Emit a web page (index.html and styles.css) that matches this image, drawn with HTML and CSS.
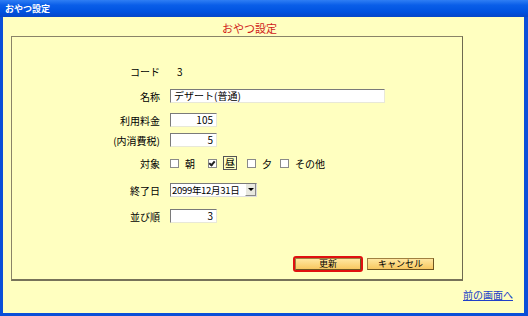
FILE: index.html
```html
<!DOCTYPE html>
<html lang="ja">
<head>
    <meta charset="UTF-8">
    <title>おやつ設定</title>
    <link rel="stylesheet" href="styles.css">
</head>
<body>
    <div class="window">
        <div class="titlebar">おやつ設定</div>
        <div class="client">
            <h1 class="heading">おやつ設定</h1>
            <div class="panel">
                <div class="row r-code">
                    <span class="label">コード</span>
                    <span class="value">3</span>
                </div>
                <div class="row r-name">
                    <span class="label">名称</span>
                    <span class="field wide">デザート(普通)</span>
                </div>
                <div class="row r-price">
                    <span class="label">利用料金</span>
                    <span class="field num">105</span>
                </div>
                <div class="row r-tax">
                    <span class="label">(内消費税)</span>
                    <span class="field num">5</span>
                </div>
                <div class="row r-target">
                    <span class="label">対象</span>
                    <div class="checks">
                        <span class="check c1"><span class="box"></span>朝</span>
                        <span class="check c2"><span class="box on"></span><span class="focus">昼</span></span>
                        <span class="check c3"><span class="box"></span>夕</span>
                        <span class="check"><span class="box"></span>その他</span>
                    </div>
                </div>
                <div class="row r-end">
                    <span class="label">終了日</span>
                    <span class="select">
                        <span class="select-text">2099年12月31日</span>
                        <span class="select-btn"></span>
                    </span>
                </div>
                <div class="row r-order">
                    <span class="label">並び順</span>
                    <span class="field num">3</span>
                </div>
                <div class="buttons">
                    <span class="focus-ring"><button class="btn">更新</button></span>
                    <button class="btn cancel">キャンセル</button>
                </div>
            </div>
            <div class="footer">
                <a href="#" class="back">前の画面へ</a>
            </div>
        </div>
    </div>
</body>
</html>
```

FILE: styles.css
```css
body {
    margin: 0;
    font-family: "Noto Sans CJK JP", "Liberation Sans", sans-serif;
    font-size: 10px;
    color: #000;
    background: #ffffc0;
}
.window {
    width: 528px;
    height: 316px;
    box-sizing: border-box;
    border-left: 3px solid #0a4fd8;
    border-right: 4px solid #0a4fd8;
    border-bottom: 3px solid #0a4fd8;
    display: flex;
    flex-direction: column;
}
.titlebar {
    height: 17px;
    margin: 0 -4px 0 -3px;
    padding-left: 5px;
    background: linear-gradient(#2f7ef4 0%, #0a5ee8 30%, #0052e0 70%, #0646c8 100%);
    color: #fff;
    font-weight: bold;
    font-size: 9px;
    line-height: 17px;
}
.client {
    flex: 1;
    background: #ffffc0;
}
.heading {
    margin: 0;
    height: 19px;
    text-align: center;
    color: #d01818;
    font-size: 11px;
    font-weight: normal;
    line-height: 22px;
    padding-right: 28px;
}
.panel {
    margin-left: 8px;
    width: 452px;
    height: 245px;
    box-sizing: border-box;
    border: 1px solid #8a8468;
    border-right-color: #6e6a50;
    border-bottom: 2px solid #77735a;
    padding-top: 27px;
}
.row {
    display: flex;
    align-items: center;
    height: 14px;
}
.label {
    width: 148px;
    text-align: right;
    margin-right: 10px;
}
.r-name { margin-top: 11px; }
.r-price { margin-top: 10px; }
.r-tax { margin-top: 6px; }
.r-target { margin-top: 9px; }
.r-end { margin-top: 13px; }
.r-order { margin-top: 12px; }
.value { padding-left: 7px; }
.field {
    height: 14px;
    box-sizing: border-box;
    background: #fff;
    border-top: 1px solid #7a7a7a;
    border-left: 1px solid #7a7a7a;
    border-right: 1px solid #e8e8d8;
    border-bottom: 1px solid #e8e8d8;
    line-height: 12px;
    padding: 0 3px;
}
.wide { width: 215px; }
.num { width: 47px; text-align: right; }
.checks {
    display: flex;
    align-items: center;
}
.check {
    display: flex;
    align-items: center;
    flex-shrink: 0;
}
.c1 { width: 38px; }
.c2 { width: 39px; }
.c3 { width: 33px; }
.box {
    flex-shrink: 0;
    width: 7px;
    height: 7px;
    border: 1px solid #8a8a8a;
    background: #fff;
    margin-right: 6px;
    position: relative;
}
.box.on::after {
    content: "";
    position: absolute;
    left: 1px;
    top: 0;
    width: 2px;
    height: 4px;
    border-right: 2px solid #222;
    border-bottom: 2px solid #222;
    transform: rotate(40deg);
}
.focus {
    border: 1px solid #555;
    padding: 0 1px;
    line-height: 12px;
}
.select {
    display: flex;
    width: 87px;
    height: 14px;
    box-sizing: border-box;
    background: #fff;
    border: 1px solid #7a7a7a;
    border-right-color: #ddd;
    border-bottom-color: #ddd;
}
.select-text {
    flex: 1;
    font-size: 9.5px;
    line-height: 12px;
    padding-left: 1px;
    letter-spacing: -0.3px;
}
.select-btn {
    width: 11px;
    background: #e8e8e0;
    border-left: 1px solid #fff;
    border-right: 1px solid #888;
    border-bottom: 1px solid #888;
    box-sizing: border-box;
    position: relative;
}
.select-btn::after {
    content: "";
    position: absolute;
    left: 2px;
    top: 4px;
    border-left: 3px solid transparent;
    border-right: 3px solid transparent;
    border-top: 3px solid #000;
}
.buttons {
    display: flex;
    align-items: center;
    margin-top: 33px;
    padding-left: 281px;
}
.focus-ring {
    display: inline-flex;
    border: 2px solid #e01010;
    border-radius: 3px;
    margin-right: 4px;
}
.btn {
    width: 66px;
    height: 12px;
    padding: 0;
    font-family: inherit;
    font-size: 9px;
    line-height: 10px;
    background: linear-gradient(#ffe7a0, #f8c860);
    border: 1px solid #a08040;
    border-right-color: #6e5420;
    border-bottom-color: #6e5420;
    color: #000;
}
.cancel { width: 67px; }
.footer {
    display: flex;
    justify-content: flex-end;
    padding-right: 11px;
    padding-top: 6px;
}
.back {
    color: #2040c8;
    text-decoration: underline;
    font-size: 10px;
}
```
